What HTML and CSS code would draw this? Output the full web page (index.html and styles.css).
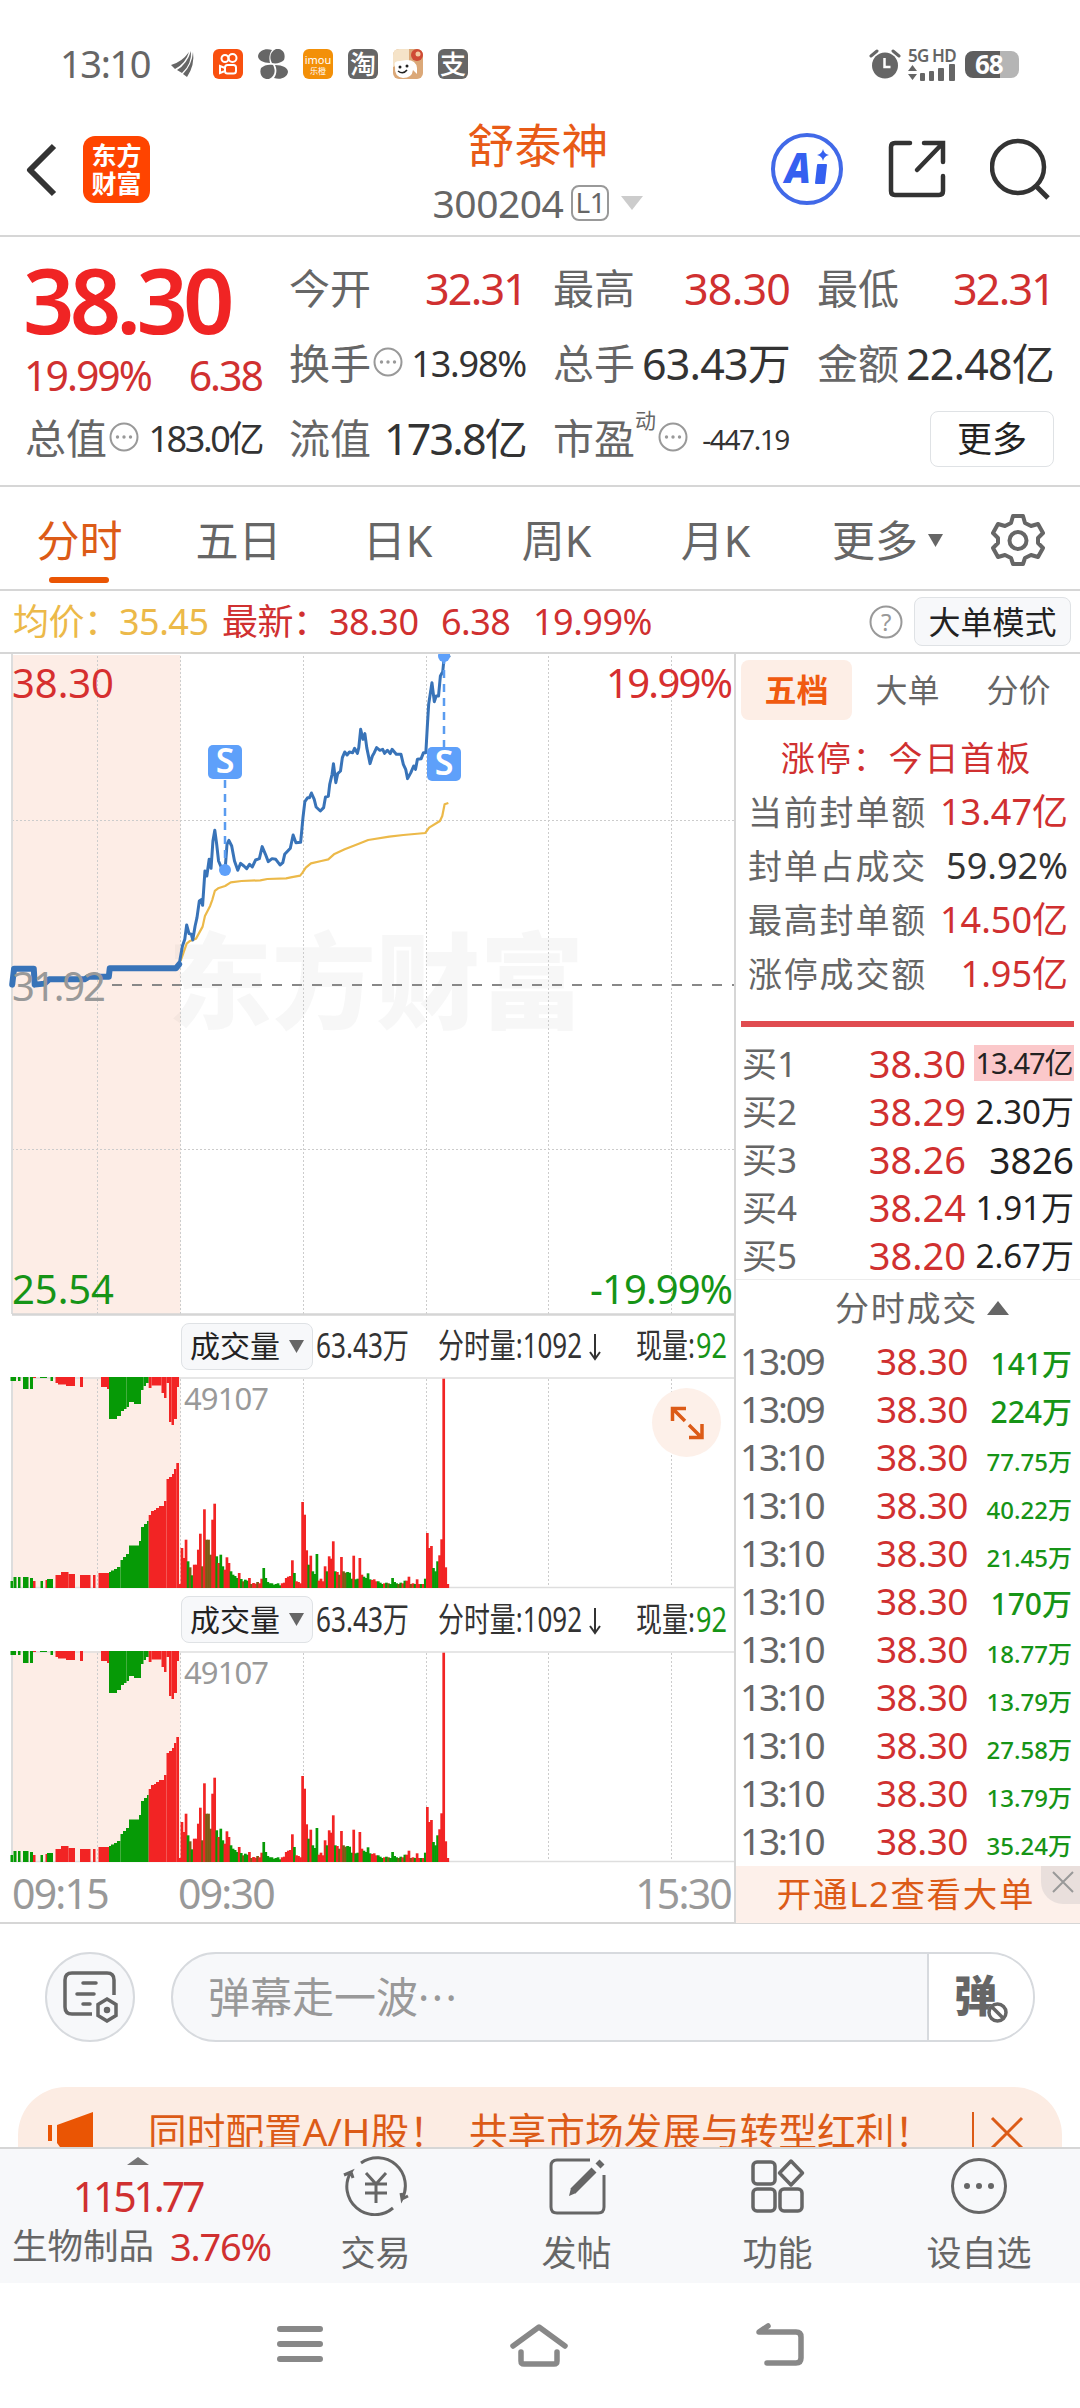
FILE: index.html
```html
<!DOCTYPE html>
<html lang="zh-CN">
<head>
    <meta charset="UTF-8">
    <meta name="viewport" content="width=device-width, initial-scale=1.0">
    <title>舒泰神 300204</title>
    <link rel="stylesheet" href="styles.css">
</head>
<body>
    <div class="status-bar">
        <span class="clock">13:10</span>
        <div class="status-icons">
            <svg width="30" height="30" viewBox="0 0 30 30" fill="#666"><path d="M3 16Q14 13 21 3 18 14 7 20zM9 21Q19 15 23 2q1 13-9 22zM15 25Q24 16 25 3q2 13-6 25z"/></svg>
            <svg width="30" height="30" viewBox="0 0 30 30"><rect width="30" height="30" rx="6" fill="#f9500f"/><g fill="none" stroke="#fff" stroke-width="2"><circle cx="12" cy="9.500" r="3.500"/><circle cx="19.500" cy="9" r="4"/><rect x="12" y="16" width="11" height="8.500" rx="2.500"/><path d="M12 19l-5-2v7l5-2z"/></g></svg>
            <svg width="30" height="30" viewBox="0 0 30 30"><g fill="#666"><path d="M14 14C11 8 12 3 18 0c7-1 10 5 8 11-3 3-8 4-12 3z"/><path d="M12 14C5 14 0 11 0 7 1 1 8-1 14 1c-3 4-3 9-2 13z"/><path d="M15 16c3 6 2 11-4 14-7 1-10-5-8-11 3-3 8-4 12-3z"/><path d="M17 16c8 0 13 3 13 7-1 6-8 8-14 6 3-4 3-9 1-13z"/></g></svg>
            <span class="app-icon app-imou"><b>imou</b><i>乐橙</i></span>
            <span class="app-icon app-grey">淘</span>
            <svg width="30" height="30" viewBox="0 0 30 30"><rect width="30" height="30" rx="6" fill="#dba878"/><path d="M0 6q0-6 6-6h10v12L0 18z" fill="#f5e3c8"/><circle cx="24" cy="6" r="6" fill="#cf4a35"/><circle cx="25" cy="5" r="2.500" fill="#f3c9a0"/><path d="M2 17q-2-5 5-5l7-1q9 0 10 8v6l-4-4q-1 8-10 8-9-1-8-12z" fill="#fff"/><circle cx="7" cy="18" r="1.500" fill="#222"/><circle cx="14" cy="17" r="1.500" fill="#222"/><path d="M5 22q5 4 9-1" fill="none" stroke="#222" stroke-width="1.500"/></svg>
            <span class="app-icon app-grey">支</span>
        </div>
        <div class="status-right">
            <svg width="32" height="30" viewBox="0 0 32 30"><circle cx="16" cy="16.500" r="13" fill="#666"/><path d="M2 7l6-5M30 7l-6-5" stroke="#666" stroke-width="3" stroke-linecap="round"/><path d="M15.500 9v9h6" fill="none" stroke="#fff" stroke-width="2.500"/></svg>
            <div class="signal">
                <span>5G HD</span>
                <svg width="48" height="17" viewBox="0 0 48 17" fill="#666"><path d="M0 7l4.500-6L9 7zM0 10h9l-4.500 6z"/><rect x="12" y="9" width="5" height="8" rx="1"/><rect x="21" y="7" width="5" height="10" rx="1"/><rect x="30" y="4" width="6" height="13" rx="1"/><rect x="41" y="0" width="6" height="17" rx="1"/></svg>
            </div>
            <div class="battery"><span>68</span></div>
        </div>
    </div>

    <header class="header">
        <div class="header-left">
            <svg width="32" height="56" viewBox="0 0 32 56"><path d="M28 4 4 28l24 24" fill="none" stroke="#333" stroke-width="6" stroke-linejoin="round"/></svg>
            <div class="logo">东方<br>财富</div>
        </div>
        <div class="header-title">
            <h1>舒泰神</h1>
            <div class="code"><span>300204</span><em>L1</em><svg width="22" height="14" viewBox="0 0 22 14"><path d="M0 0h22L11 14z" fill="#ccc"/></svg></div>
        </div>
        <div class="header-right">
            <svg width="74" height="74" viewBox="0 0 74 74"><circle cx="37" cy="37" r="34" fill="none" stroke="#4169e8" stroke-width="4"/><text x="15" y="51" class="ai-text" textLength="26" lengthAdjust="spacingAndGlyphs">A</text><path d="M48 33h8l-2 18h-8z" fill="#3560f0" stroke="#3560f0" stroke-linejoin="round" stroke-width="2"/><path d="M53 17q1 5 6 6-5 1-6 6-1-5-6-6 5-1 6-6z" fill="#3560f0"/></svg>
            <svg width="60" height="60" viewBox="0 0 60 60"><path d="M23 4H8q-4 0-4 4v44q0 4 4 4h44q4 0 4-4V37M37 4h19v19M55 5 30 31" fill="none" stroke="#333" stroke-width="4.500" stroke-linecap="round"/></svg>
            <svg width="60" height="62" viewBox="0 0 60 62"><circle cx="28" cy="29" r="26" fill="none" stroke="#333" stroke-width="4.500"/><path d="M46 48l12 12" stroke="#333" stroke-width="5"/></svg>
        </div>
    </header>

    <section class="quote">
        <div class="quote-main">
            <strong>38.30</strong>
            <div class="quote-change"><span>19.99%</span><span>6.38</span></div>
        </div>
        <div class="item"><label>今开</label><b class="red tight">32.31</b></div>
        <div class="item"><label>最高</label><b class="red">38.30</b></div>
        <div class="item"><label>最低</label><b class="red tight">32.31</b></div>
        <div class="item"><label>换手<svg class="dots"><use href="#dots"/></svg></label><b class="mid">13.98%</b></div>
        <div class="item"><label>总手</label><b>63.43万</b></div>
        <div class="item"><label>金额</label><b>22.48亿</b></div>
        <div class="item"><label>总值<svg class="dots"><use href="#dots"/></svg></label><b class="mid total">183.0亿</b></div>
        <div class="item"><label>流值</label><b class="tight">173.8亿</b></div>
        <div class="item"><label>市盈<sup>动</sup><svg class="dots"><use href="#dots"/></svg></label><b class="small">-447.19</b></div>
        <div class="item item-end"><button class="more-button">更多</button></div>
    </section>

    <nav class="tabs">
        <a class="active">分时</a>
        <a>五日</a>
        <a>日K</a>
        <a>周K</a>
        <a>月K</a>
        <a class="tab-more">更多<svg width="15" height="13" viewBox="0 0 15 13"><path d="M0 0h15L7.500 13z" fill="#666"/></svg></a>
        <svg class="gear" width="54" height="54" viewBox="0 0 54 54"><path d="M22 3h10l2 7 6 3 7-2 5 9-5 5v5l5 5-5 9-7-2-6 3-2 6H22l-2-6-6-3-7 2-5-9 5-5v-5l-5-5 5-9 7 2 6-3z" fill="none" stroke="#666" stroke-width="4" stroke-linejoin="round"/><circle cx="27" cy="27.500" r="8.500" fill="none" stroke="#666" stroke-width="4"/></svg>
    </nav>

    <div class="legend">
        <span class="avg">均价：</span><span class="avg avg-value">35.45</span>
        <span class="latest">最新：</span><span class="latest v1">38.30</span><span class="latest v2">6.38</span><span class="latest v3">19.99%</span>
        <svg class="help" width="34" height="34" viewBox="0 0 34 34"><circle cx="17" cy="17" r="15.500" fill="none" stroke="#999" stroke-width="2"/><text x="17" y="25.500" text-anchor="middle" font-size="24" fill="#999">?</text></svg>
        <button class="mode-button">大单模式</button>
    </div>

    <main class="board">
        <div class="charts">
            <svg class="price-chart" width="734" height="662" viewBox="0 0 734 662">
                <rect x="12" y="1" width="168.500" height="659" fill="#fdede6"/>
                <text x="168" y="367" class="watermark" textLength="416">东方财富</text>
                <g class="grid-lines">
                    <path d="M97.500 2V660M180.500 2V660M303.500 2V660M426.500 2V660M548.500 2V660M671.500 2V660M12 166.500H734M12 495.500H734"/>
                </g>
                <path d="M12 0V660" stroke="#ddd" stroke-width="2"/>
                <path d="M12 660.500H734" stroke="#d5d5d5" stroke-width="2.500"/>
                <path d="M112 331H734" stroke="#888" stroke-width="2" stroke-dasharray="10 10"/>
                <g transform="translate(0 -13) scale(.469 .3333)" class="lines">
                    <polyline class="line-avg" points="385,960 390,940 398,908 405,900 418,893 425,875 432,857 437,825 448,795 453,775 458,750 465,742 480,735 492,724 515,720 555,718 570,714 610,712 620,709 640,704 645,695 652,680 663,667 685,660 700,655 712,640 735,625 765,608 785,597 830,587 860,582 907,576 915,560 938,540 943,525 948,490 956,486"/>
                    <polyline class="line-pre" points="26,1031 30,983 72,983 74,1031 95,1028 105,1015 180,1015 190,1007 232,1007 234,982 375,982 382,970"/>
                    <polyline class="line-price" points="382,970 389,915 394,895 398,852 403,878 408,880 411,897 416,855 420,830 425,780 429,776 432,793 437,690 441,705 446,655 450,682 454,600 458,568 462,610 466,660 472,680 480,686 484,610 488,598 494,615 500,660 507,688 513,667 520,675 526,683 532,670 538,678 545,657 553,653 559,617 566,640 572,662 580,653 588,655 597,672 603,665 607,640 619,622 625,582 631,605 641,604 646,530 650,482 656,470 660,470 664,456 670,475 674,498 683,510 690,500 694,468 700,466 703,430 708,400 711,368 716,425 720,398 726,390 730,350 735,333 740,342 745,333 752,335 756,322 762,337 765,320 769,265 774,295 778,278 782,320 789,368 794,345 798,335 803,320 810,328 816,325 820,337 826,328 832,338 836,325 845,340 855,340 860,370 865,385 869,413 876,395 882,375 886,385 890,355 898,353 903,335 908,335 911,260 914,190 921,125 926,182 930,165 935,165 939,105 944,92 947,50 960,44"/>
                </g>
                <g class="marker">
                    <path d="M225 126V216M444 2V94"/>
                    <circle cx="225" cy="216" r="6"/>
                    <circle cx="444" cy="2" r="6"/>
                    <rect x="208" y="91" width="34" height="34" rx="5"/>
                    <rect x="427" y="93" width="34" height="34" rx="5"/>
                    <text x="225" y="119">S</text>
                    <text x="444" y="121">S</text>
                </g>
                <g class="axis-text">
                    <text x="12" y="44" fill="#d62f2f" textLength="102">38.30</text>
                    <text x="733" y="44" fill="#d62f2f" text-anchor="end" textLength="127">19.99%</text>
                    <text x="12" y="347" fill="#999" textLength="94">31.92</text>
                    <text x="12" y="650" fill="#169416" textLength="102">25.54</text>
                    <text x="733" y="650" fill="#169416" text-anchor="end" textLength="143">-19.99%</text>
                </g>
            </svg>

            <div class="volume-head">
                <button class="volume-button">成交量<svg width="15" height="13" viewBox="0 0 15 13"><path d="M0 0h15L7.500 13z" fill="#666"/></svg></button>
                <svg class="volume-info" width="421" height="50" viewBox="313 0 421 50"><use href="#volumeInfo"/></svg>
            </div>
            <svg class="volume-chart" width="734" height="212" viewBox="0 0 734 212"></svg>

            <div class="volume-head">
                <button class="volume-button">成交量<svg width="15" height="13" viewBox="0 0 15 13"><path d="M0 0h15L7.500 13z" fill="#666"/></svg></button>
                <svg class="volume-info" width="421" height="50" viewBox="313 0 421 50"><use href="#volumeInfo"/></svg>
            </div>
            <svg class="volume-chart" width="734" height="212" viewBox="0 0 734 212"></svg>

            <div class="time-axis"><span>09:15</span><span>09:30</span><span>15:30</span></div>

            <div class="expand">
                <svg width="36" height="36" viewBox="0 0 36 36"><path d="M3.500 16V3.500H17M4 4l12 12M33 19v13.500H20M32 32 20 20" fill="none" stroke="#dc5b17" stroke-width="3.500"/></svg>
            </div>
        </div>

        <aside class="side">
            <div class="side-tabs"><a class="active">五档</a><a>大单</a><a>分价</a></div>
            <div class="limit">
                <h2>涨停：今日首板</h2>
                <div><label>当前封单额</label><b class="red">13.47亿</b></div>
                <div><label>封单占成交</label><b>59.92%</b></div>
                <div><label>最高封单额</label><b class="red">14.50亿</b></div>
                <div><label>涨停成交额</label><b class="red">1.95亿</b></div>
            </div>
            <ul class="buys">
                <li><span>买1</span><b>38.30</b><em class="hot">13.47亿</em></li>
                <li><span>买2</span><b>38.29</b><em>2.30万</em></li>
                <li><span>买3</span><b>38.26</b><em class="full">3826</em></li>
                <li><span>买4</span><b>38.24</b><em>1.91万</em></li>
                <li><span>买5</span><b>38.20</b><em>2.67万</em></li>
            </ul>
            <div class="deals-title">分时成交<svg width="22" height="14" viewBox="0 0 22 14"><path d="M0 14h22L11 0z" fill="#666"/></svg></div>
            <ul class="deals">
                <li><span>13:09</span><b>38.30</b><em class="big">141万</em></li>
                <li><span>13:09</span><b>38.30</b><em class="big">224万</em></li>
                <li><span>13:10</span><b>38.30</b><em>77.75万</em></li>
                <li><span>13:10</span><b>38.30</b><em>40.22万</em></li>
                <li><span>13:10</span><b>38.30</b><em>21.45万</em></li>
                <li><span>13:10</span><b>38.30</b><em class="big">170万</em></li>
                <li><span>13:10</span><b>38.30</b><em>18.77万</em></li>
                <li><span>13:10</span><b>38.30</b><em>13.79万</em></li>
                <li><span>13:10</span><b>38.30</b><em>27.58万</em></li>
                <li><span>13:10</span><b>38.30</b><em>13.79万</em></li>
                <li><span>13:10</span><b>38.30</b><em>35.24万</em></li>
            </ul>
            <div class="level2">开通L2查看大单
                <span class="level2-close"><svg width="22" height="22" viewBox="0 0 22 22"><path d="M1 1l20 20M21 1 1 21" stroke="#999" stroke-width="2"/></svg></span>
            </div>
        </aside>
    </main>

    <div class="chat">
        <div class="chat-note">
            <svg width="56" height="52" viewBox="0 0 56 52" fill="none" stroke="#666" stroke-width="3.500"><path d="M51 24V9q0-7-7-7H9Q2 2 2 9v27q0 7 7 7h20"/><path d="M20 12h13M14 23h17M20 33h7" stroke-linecap="round"/><path d="M44 28l9 5.500v11L44 50l-9-5.500v-11z"/><circle cx="44" cy="39" r="1.500"/></svg>
        </div>
        <div class="chat-input">
            <span>弹幕走一波<small>···</small></span>
            <div class="chat-switch">弹<svg width="23" height="23" viewBox="0 0 23 23"><circle cx="11.500" cy="11.500" r="10" fill="#fff"/><circle cx="11.500" cy="11.500" r="8.500" fill="none" stroke="#666" stroke-width="3.500"/><path d="M6 6l11 11" stroke="#666" stroke-width="3.500"/></svg></div>
        </div>
    </div>

    <div class="notice">
        <svg width="48" height="50" viewBox="0 0 48 50" fill="#ea5504"><rect x="1" y="13" width="4" height="16"/><path d="M10 13 46 0v42l-18-6q-1 8-8 8-6 0-7-9l-3-4z"/></svg>
        <p>同时配置A/H股！<span>共享市场发展与转型红利！</span></p>
        <i></i>
        <svg class="notice-close" width="34" height="34" viewBox="0 0 34 34"><path d="M2 2l30 30M32 2 2 32" stroke="#dc5b17" stroke-width="3"/></svg>
    </div>

    <footer class="footer">
        <div class="sector">
            <svg width="22" height="8" viewBox="0 0 22 8"><path d="M0 8h22L11 0z" fill="#777"/></svg>
            <strong>1151.77</strong>
            <div><span>生物制品</span><b>3.76%</b></div>
        </div>
        <a>
            <svg width="66" height="60" viewBox="0 0 66 60" fill="none" stroke="#666" stroke-width="3"><path d="M18 7A28 28 0 0 1 59 43l-1-6M59 43l6-3M50 52A28 28 0 0 1 8 16l-7 3M8 16l2 6M23 17l10 11 10-11M33 28v19M22 28h22M22 37h22"/></svg>
            交易
        </a>
        <a>
            <svg width="60" height="60" viewBox="0 0 60 60" fill="none" stroke="#666" stroke-width="3"><path d="M43 4H10q-6 0-6 6v41q0 6 6 6h41q6 0 6-6V19"/><path d="M26 35 47 14" stroke-width="7"/><path d="M51 10l4-4" stroke-width="7"/><path d="M22 40l2-8 5 5z" fill="#666" stroke="none"/></svg>
            发帖
        </a>
        <a>
            <svg width="60" height="60" viewBox="0 0 60 60" fill="none" stroke="#666" stroke-width="3.500"><rect x="5" y="6" width="22" height="22" rx="4"/><rect x="5" y="33" width="22" height="22" rx="4"/><rect x="32" y="33" width="22" height="22" rx="4"/><path d="M43 5l11.500 12L43 29 31.500 17z" stroke-linejoin="round"/></svg>
            功能
        </a>
        <a>
            <svg width="60" height="60" viewBox="0 0 60 60"><circle cx="30" cy="30" r="26.500" fill="none" stroke="#666" stroke-width="3"/><g fill="#666"><circle cx="18" cy="30" r="3"/><circle cx="30" cy="30" r="3"/><circle cx="42" cy="30" r="3"/></g></svg>
            设自选
        </a>
    </footer>

    <div class="system-nav">
        <svg width="46" height="44" viewBox="0 0 46 44"><path d="M3 7h40M3 22h40M3 37h40" stroke="#888" stroke-width="6" stroke-linecap="round"/></svg>
        <svg width="60" height="46" viewBox="0 0 60 46" fill="none" stroke="#888" stroke-width="5.500" stroke-linejoin="round" stroke-linecap="round"><path d="M4 24 30 5l26 19M12 30v9q0 3 3 3h30q3 0 3-3v-9"/></svg>
        <svg width="50" height="46" viewBox="0 0 50 46" fill="none" stroke="#888" stroke-width="5.500" stroke-linejoin="round" stroke-linecap="round"><path d="M12 41h29q5 0 5-5V15q0-5-5-5H4l9-6"/></svg>
    </div>

    <svg class="defs" width="0" height="0">
        <symbol id="dots" viewBox="0 0 30 30"><circle cx="15" cy="15" r="13.500" fill="none" stroke="#999" stroke-width="2"/><g fill="#999"><circle cx="8.500" cy="15" r="1.700"/><circle cx="15" cy="15" r="1.700"/><circle cx="21.500" cy="15" r="1.700"/></g></symbol>
        <g id="volumeInfo" font-size="34" fill="#333">
            <text x="316" y="37" textLength="93" lengthAdjust="spacingAndGlyphs">63.43万</text>
            <text x="438" y="37" textLength="144" lengthAdjust="spacingAndGlyphs">分时量:1092</text>
            <path d="M595 13V37M590 31l5 7 5-7" fill="none" stroke="#333" stroke-width="2"/>
            <text x="636" y="37" textLength="59" lengthAdjust="spacingAndGlyphs">现量:</text>
            <text x="696" y="37" fill="#169416" textLength="31" lengthAdjust="spacingAndGlyphs">92</text>
        </g>
    </svg>
    <script src="script.js"></script>
</body>
</html>
```
FILE: styles.css
```css
:root {
    --text: #333;
    --label: #666;
    --muted: #999;
    --red: #d03030;
    --green: #169416;
    --orange: #dc5b17;
    --line: #d6d6d6;
    --soft: #f7f8fa;
}

* {
    box-sizing: border-box;
}

body {
    margin: 0;
    width: 1080px;
    height: 2408px;
    overflow: hidden;
    display: flex;
    flex-direction: column;
    background: #fff;
    color: var(--text);
    font-family: "Noto Sans", "Noto Sans CJK SC", sans-serif;
    line-height: 1;
    white-space: nowrap;
}

b, em, i, h1, h2, strong {
    font-weight: 400;
    font-style: normal;
}

h1, h2, p, ul {
    margin: 0;
    padding: 0;
}

li {
    list-style: none;
}

svg {
    display: block;
    flex: none;
}

button {
    font-family: inherit;
    line-height: 1;
    padding: 0;
    color: #222;
    background: var(--soft);
    border: 1px solid #dfe2e5;
    border-radius: 8px;
}

.defs {
    position: absolute;
}

.red {
    color: var(--red);
}

/* 状态栏 */
.status-bar {
    height: 98px;
    flex: none;
    padding: 30px 61px 0 60px;
    display: flex;
    align-items: center;
    color: #666;
}

.clock {
    width: 108px;
    margin-top: -2px;
    font-size: 38px;
    letter-spacing: -1.4px;
}

.status-icons {
    display: flex;
    gap: 15px;
}

.app-icon {
    width: 30px;
    height: 30px;
    border-radius: 6px;
    display: flex;
    flex-direction: column;
    align-items: center;
    justify-content: center;
    color: #fff;
}

.app-imou {
    gap: 2px;
    background: #f39008;
}

.app-imou b {
    font-size: 11px;
}

.app-imou i {
    font-size: 8px;
}

.app-grey {
    background: #666;
    font-size: 26px;
    font-weight: 500;
}

.status-right {
    margin-left: auto;
    display: flex;
    align-items: center;
    gap: 7px;
}

.signal {
    width: 50px;
}

.signal span {
    display: block;
    font-size: 17px;
    font-weight: 600;
    letter-spacing: -0.8px;
}

.battery {
    width: 54px;
    height: 27px;
    border-radius: 8px;
    background: linear-gradient(90deg, #5e5e5e 65%, #b5b5b5 65%);
    color: #fff;
    font-size: 26px;
    font-weight: 700;
    line-height: 26px;
    padding-left: 10px;
    letter-spacing: -1px;
}

/* 顶部标题 */
.header {
    height: 139px;
    flex: none;
    border-bottom: 2px solid var(--line);
    display: grid;
    grid-template-columns: 1fr 300px 1fr;
    padding: 0 30px 0 26px;
}

.header-left {
    display: flex;
    align-items: center;
    gap: 25px;
    padding-top: 6px;
}

.logo {
    width: 67px;
    height: 67px;
    border-radius: 12px;
    background: #ff4400;
    color: #fff;
    font-size: 25px;
    font-weight: 700;
    line-height: 28px;
    padding-top: 5px;
    text-align: center;
}

.header-title {
    text-align: center;
    padding-top: 24px;
}

.header-title h1 {
    font-size: 47px;
    color: #e85b17;
}

.code {
    display: flex;
    justify-content: center;
    align-items: center;
    gap: 8px;
    margin-top: 14px;
    font-size: 39px;
    letter-spacing: -0.5px;
    color: var(--label);
}

.code em {
    width: 38px;
    height: 36px;
    border: 2px solid #999;
    border-radius: 8px;
    font-size: 28px;
    line-height: 31px;
}

.code svg {
    margin-left: 4px;
}

.header-right {
    display: flex;
    align-items: center;
    justify-content: flex-end;
    gap: 43px;
    padding-top: 4px;
}

.ai-text {
    font-size: 42px;
    font-weight: 900;
    font-style: italic;
    fill: #3560f0;
}

/* 行情数据 */
.quote {
    height: 250px;
    flex: none;
    border-bottom: 2px solid var(--line);
    display: grid;
    grid-template-columns: repeat(4, 236px);
    grid-template-rows: repeat(3, 75px);
    column-gap: 28px;
    padding: 14px 26px;
}

.quote-main {
    grid-row: span 2;
    color: var(--red);
}

.quote-main strong {
    display: block;
    margin: 3px 0 0 -3px;
    font-size: 90px;
    font-weight: 600;
    letter-spacing: -4.8px;
    color: #f02424;
}

.quote-change {
    display: flex;
    justify-content: space-between;
    font-size: 41px;
    letter-spacing: -2px;
    margin: 11px 0 0 -2px;
}

.item {
    display: flex;
    align-items: center;
    justify-content: space-between;
    font-size: 43px;
}

.item label {
    display: flex;
    align-items: center;
    font-size: 41px;
    color: var(--label);
    margin-left: -1px;
}

.item sup {
    font-size: 21px;
    align-self: flex-start;
    margin-top: -8px;
    line-height: 1;
    vertical-align: baseline;
}

.item b {
    letter-spacing: -0.8px;
}

.item .tight {
    letter-spacing: -1.8px;
}

.item .mid {
    font-size: 36px;
    letter-spacing: -1.2px;
}

.item .total {
    letter-spacing: -2.4px;
}

.item .small {
    font-size: 28px;
    letter-spacing: -1.4px;
    margin-right: 1px;
}

.dots {
    width: 30px;
    height: 30px;
    margin: -4px 0 0 2px;
}

.item-end {
    justify-content: flex-end;
}

.more-button {
    width: 124px;
    height: 56px;
    font-size: 35px;
    background: #fff;
}

/* 周期切换 */
.tabs {
    height: 104px;
    flex: none;
    border-bottom: 2px solid var(--line);
    display: flex;
    align-items: center;
    padding: 4px 35px 0 0;
    font-size: 43px;
    color: var(--label);
}

.tabs a {
    width: 159px;
    height: 100%;
    display: flex;
    align-items: center;
    justify-content: center;
}

.tabs .active {
    position: relative;
    color: #dc5b17;
}

.tabs .active::after {
    content: "";
    position: absolute;
    bottom: 6px;
    left: 49px;
    width: 60px;
    height: 6px;
    border-radius: 3px;
    background: #ea5504;
}

.tabs .tab-more {
    width: 185px;
    gap: 10px;
}

.gear {
    margin-left: auto;
}

/* 均价 / 最新 */
.legend {
    height: 63px;
    flex: none;
    border-bottom: 2px solid var(--line);
    display: flex;
    align-items: center;
    padding: 0 9px 0 13px;
    font-size: 36px;
    letter-spacing: -0.5px;
}

.legend .avg {
    color: #ecb949;
    width: 106px;
}

.legend .avg-value {
    width: 103px;
}

.latest {
    color: var(--red);
    width: 107px;
}

.legend .v1 {
    width: 112px;
}

.legend .v2 {
    width: 92px;
}

.help {
    margin-left: auto;
    margin-right: 11px;
}

.mode-button {
    width: 157px;
    height: 49px;
    font-size: 32px;
}

/* 主体 */
.board {
    height: 1270px;
    flex: none;
    border-bottom: 2px solid var(--line);
    display: grid;
    grid-template-columns: 734px 346px;
}

.charts {
    position: relative;
}

.watermark {
    font-size: 104px;
    font-weight: 900;
    fill: #888;
    fill-opacity: 0.07;
}

.grid-lines path {
    stroke: #ccc;
    stroke-width: 1;
    stroke-dasharray: 2 2;
}

.lines polyline {
    fill: none;
    stroke-linejoin: round;
    vector-effect: non-scaling-stroke;
}

.line-avg {
    stroke: #ecb949;
    stroke-width: 2.2;
}

.line-pre {
    stroke: #3873b8;
    stroke-width: 6;
    stroke-linecap: round;
}

.line-price {
    stroke: #3873b8;
    stroke-width: 3;
}

.marker path {
    stroke: #5a9cf0;
    stroke-width: 2.5;
    stroke-dasharray: 8 6;
}

.marker circle,
.marker rect {
    fill: #5ea0fa;
}

.marker text {
    fill: #fff;
    font-size: 34px;
    font-weight: 600;
    text-anchor: middle;
}

.axis-text {
    font-size: 40px;
}

.volume-head {
    height: 61px;
    display: flex;
    align-items: center;
    padding: 0 0 1px 181px;
}

.volume-head + .volume-chart + .volume-head {
    height: 62px;
}

.volume-button {
    width: 132px;
    height: 47px;
    display: flex;
    align-items: center;
    justify-content: center;
    gap: 9px;
    font-size: 30px;
}

.time-axis {
    height: 60px;
    display: grid;
    grid-template-columns: 166px 1fr auto;
    align-items: center;
    padding: 1px 3px 0 12px;
    font-size: 41px;
    letter-spacing: -1.8px;
    color: var(--muted);
}

.expand {
    position: absolute;
    left: 652px;
    top: 734px;
    width: 69px;
    height: 69px;
    border-radius: 50%;
    background: #fdf0e9;
    display: flex;
    align-items: center;
    justify-content: center;
}

/* 右侧盘口 */
.side {
    border-left: 2px solid var(--line);
    display: flex;
    flex-direction: column;
}

.side-tabs {
    display: flex;
    padding: 6px 0 0 5px;
    font-size: 32px;
    color: var(--label);
}

.side-tabs a {
    width: 111px;
    height: 60px;
    display: flex;
    align-items: center;
    justify-content: center;
}

.side-tabs .active {
    background: #fdeee6;
    border-radius: 8px;
    color: #f05a10;
    font-weight: 700;
}

.limit {
    height: 307px;
    margin: 0 6px 0 5px;
    padding: 12px 6px 0 7px;
    border-bottom: 6px solid #e04c50;
}

.limit h2 {
    height: 53px;
    line-height: 53px;
    text-align: center;
    font-size: 34px;
    letter-spacing: 1.9px;
    margin-left: -3px;
    color: var(--red);
}

.limit div {
    height: 54px;
    display: flex;
    align-items: center;
    justify-content: space-between;
    font-size: 36px;
}

.limit label {
    font-size: 34px;
    letter-spacing: 1.8px;
    color: var(--label);
}

.buys {
    height: 253px;
    padding-top: 12px;
    border-bottom: 1px solid #ececec;
}

.buys li,
.deals li {
    height: 48px;
    display: grid;
    align-items: center;
    padding: 0 6px 0 6px;
}

.buys li {
    grid-template-columns: 88px 136px 108px;
    padding-right: 0;
    font-size: 35px;
}

.side li span {
    color: var(--label);
}

.side li b {
    color: var(--red);
    text-align: right;
}

.side li em {
    text-align: right;
}

.buys b {
    font-size: 38px;
}

.buys em {
    font-size: 33px;
    color: #222;
}

.buys .full {
    font-size: 37px;
}

.buys .hot {
    width: 100px;
    height: 36px;
    margin-left: 8px;
    font-size: 29px;
    letter-spacing: -1px;
    line-height: 35px;
    text-align: center;
    background: #fbc8ca;
}

.deals-title {
    height: 56px;
    display: flex;
    align-items: center;
    justify-content: center;
    gap: 9px;
    font-size: 34px;
    letter-spacing: 1.8px;
    color: var(--label);
    padding-left: 28px;
}

.deals li {
    grid-template-columns: 93px 135px 1fr;
    align-items: baseline;
    padding: 6px 8px 0 4px;
}

.deals li:last-child {
    height: 50px;
}

.deals span {
    font-size: 37px;
    letter-spacing: -2.2px;
}

.deals b {
    font-size: 37px;
    letter-spacing: -0.5px;
}

.deals em {
    font-size: 24px;
    color: var(--green);
    font-weight: 500;
}

.deals .big {
    font-size: 30px;
}

.level2 {
    position: relative;
    flex: 1;
    display: flex;
    align-items: center;
    justify-content: center;
    padding-right: 4px;
    background: #fdf0ea;
    color: var(--orange);
    font-size: 34.5px;
    letter-spacing: 1.7px;
}

.level2-close {
    position: absolute;
    top: 0;
    right: 0;
    width: 39px;
    height: 38px;
    padding: 5px 0 0 11px;
    background: #e9dfdc;
    border-bottom-left-radius: 22px;
}

/* 弹幕输入 */
.chat {
    flex: none;
    display: flex;
    gap: 36px;
    padding: 28px 45px 0;
}

.chat-note {
    width: 90px;
    height: 90px;
    border: 2px solid #d7dade;
    border-radius: 50%;
    background: var(--soft);
    display: flex;
    align-items: center;
    justify-content: center;
    padding-left: 2px;
}

.chat-input {
    width: 864px;
    height: 90px;
    border: 2px solid #d7dade;
    border-radius: 45px;
    background: var(--soft);
    display: flex;
    align-items: center;
    overflow: hidden;
    padding-left: 35px;
    font-size: 42px;
    color: var(--muted);
}

.chat-input small {
    font-size: 42px;
    letter-spacing: 2.5px;
}

.chat-switch {
    position: relative;
    width: 106px;
    height: 90px;
    margin-left: auto;
    padding: 22px 0 0 25px;
    border-left: 2px solid #d7dade;
    background: #fff;
    color: var(--label);
    font-size: 43px;
    font-weight: 900;
}

.chat-switch svg {
    position: absolute;
    left: 57px;
    top: 49px;
}

/* 公告 */
.notice {
    height: 60px;
    flex: none;
    margin: 45px 18px 0;
    padding: 25px 38px 0 29px;
    display: flex;
    align-items: flex-start;
    overflow: hidden;
    border-radius: 48px 48px 0 0;
    background: #fcece3;
    color: var(--orange);
    font-size: 38.7px;
}

.notice p {
    margin-left: 53px;
}

.notice p span {
    margin-left: 21px;
}

.notice i {
    width: 2px;
    height: 40px;
    margin-left: auto;
    background: var(--orange);
}

.notice-close {
    margin: 4px 0 0 16px;
}

/* 底部工具栏 */
.footer {
    height: 136px;
    flex: none;
    border-top: 2px solid var(--line);
    background: var(--soft);
    display: grid;
    grid-template-columns: 275px 201px 201px 201px 202px;
}

.footer a {
    display: flex;
    flex-direction: column;
    align-items: center;
    gap: 19px;
    padding-top: 7px;
    font-size: 35px;
    color: var(--label);
}

.sector {
    display: flex;
    flex-direction: column;
    align-items: center;
    padding-top: 8px;
    color: var(--red);
}

.sector strong {
    margin-top: 11px;
    font-size: 41px;
    letter-spacing: -3.2px;
}

.sector div {
    width: 100%;
    display: flex;
    align-items: center;
    justify-content: space-between;
    margin-top: 10px;
    padding: 0 4px 0 12px;
    font-size: 38px;
    letter-spacing: -1.2px;
}

.sector span {
    font-size: 35.5px;
    letter-spacing: 0;
    color: var(--label);
}

/* 系统导航 */
.system-nav {
    height: 126px;
    flex: none;
    display: flex;
    justify-content: center;
    gap: 186px;
    padding: 39px 0 0 2px;
}
```
FILE: script.js
```js
const RED = '#f22424';
const GREEN = '#069a06';
const MIX = '#7d5a14';
const colors = { r: RED, g: GREEN, o: MIX };

// 集合竞价：[起点, 终点, 高度, 颜色]
const auctionBottom = [
    [10.5, 13, 7, 'g'], [13.5, 16.5, 11, 'g'], [18, 20.5, 11, 'g'], [23, 28.5, 11, 'g'], [30, 33, 10, 'g'], [33, 35.5, 7, 'r'],
    [40.5, 43, 7, 'g'], [45.5, 47, 8, 'r'], [47, 53, 9, 'g'], [55.5, 61, 13, 'r'], [61, 68.5, 16, 'r'], [68.5, 75, 14, 'r'],
    [80, 90.5, 13, 'r'], [93, 95.5, 13, 'r'], [98.5, 109, 15, 'r'], [109, 111, 16, 'g'], [111, 114, 17.5, 'g'],
    [114, 117, 19, 'g'], [117, 120.5, 21, 'g'], [120.5, 123, 28, 'g'], [123, 126, 31, 'g'], [126, 129, 34, 'g'],
    [129, 139, 42.5, 'g'], [139, 141, 47, 'g'], [141, 144, 61, 'g'], [144, 147, 64, 'g'], [147, 148.7, 67, 'g'],
    [148.7, 151, 73, 'r'], [151, 154, 77, 'r'], [154, 156, 78, 'r'], [156, 159, 80, 'r'], [159, 164, 82, 'r'],
    [164, 166.5, 87, 'r'], [166.5, 169, 109, 'r'], [169, 172, 111, 'r'], [172, 174, 114, 'r'], [174, 176.3, 119, 'r'],
    [176.3, 179, 125, 'r']
];
const auctionTop = [
    [10.5, 16, 4, 'g'], [18, 20.5, 4, 'g'], [23, 28.5, 12, 'g'], [30, 33, 12, 'g'], [33, 36, 1, 'r'], [40, 47, 1, 'g'],
    [50.5, 53, 4, 'g'], [55.5, 58, 6, 'r'], [58, 66, 7.5, 'r'], [66, 75, 9, 'r'], [80, 83, 10, 'r'], [101, 107, 10, 'r'],
    [107, 109, 12, 'r'], [109, 117, 42, 'g'], [117, 121, 39, 'g'], [121, 124, 34, 'g'], [124, 126.5, 32, 'g'],
    [126.5, 129, 30, 'g'], [129, 134, 25, 'g'], [134, 141, 27, 'g'], [141, 143.5, 13, 'g'], [143.5, 146, 9, 'g'],
    [146, 148.7, 6, 'g'], [148.7, 151.5, 11, 'r'], [151.5, 161.5, 8.5, 'r'], [161.5, 164, 16, 'r'], [164, 166.5, 21, 'r'],
    [166.5, 169, 6, 'r'], [169, 171.5, 45, 'r'], [171.5, 174, 48, 'r'], [174, 177, 42, 'r'], [177, 179, 10, 'r']
];

// 连续竞价，每分钟一根
const minutes = ('r120 r90 r145 g80 o62 g38 r70 r70 r115 r163 o65 r236 o145 o145 o100 r205 r253 g95 r75 g100 g65 r55 r92 r75 g50 g40 g36 g30 r45 g27 ' +
    'o20 g25 g22 r30 o12 r15 r13 o18 r14 r28 g60 g30 g18 g14 g14 g10 g12 g14 g8 r14 r16 r30 r34 r36 r83 g45 r20 r18 r14 r258 ' +
    'r220 r113 g70 r97 g50 g42 g102 r22 r28 r20 r65 g50 r95 r88 r140 g50 r48 o40 r93 o50 o46 g48 g46 g28 r97 g26 g28 r90 r40 g34 ' +
    'g30 g44 g26 r24 r26 r20 g20 g16 g12 r14 g16 o14 g12 g30 g18 g14 o12 g16 r14 g22 r22 r34 o12 r14 g12 r26 r12 g12 r12 g28 ' +
    'r165 r120 r126 g60 g50 g80 r98 r146 r628 r62 r12').split(' ');

function rect(x, y, w, h, color) {
    return `<rect x="${x}" y="${y}" width="${w}" height="${h}" fill="${color}"/>`;
}

function drawVolume(svg) {
    const bottom = 211;
    let html = rect(12, 0, 168.5, bottom, '#fdede6');
    html += '<g class="grid-lines"><path d="M97.500 2V210M180.500 2V210M303.500 2V210M426.500 2V210M548.500 2V210M671.500 2V210"/></g>';
    html += '<path d="M12 0V211" stroke="#ddd" stroke-width="2"/>';
    html += '<path d="M12 1H734M12 210.500H734" stroke="#dedede" stroke-width="1.500"/>';
    auctionBottom.forEach(([a, b, h, c]) => { html += rect(a, bottom - h, b - a, h, colors[c]); });
    auctionTop.forEach(([a, b, h, c]) => { html += rect(a, 0, b - a, h, colors[c]); });
    html += rect(179, bottom - 4, 2, 4, RED);
    minutes.forEach((m, i) => {
        const h = Number(m.slice(1)) / 3;
        html += rect((180.6 + i * 2.045).toFixed(2), (bottom - h).toFixed(1), 2.7, h.toFixed(1), colors[m[0]]);
    });
    html += '<text x="184" y="33" font-size="31" fill="#999" textLength="85">49107</text>';
    svg.innerHTML = html;
}

document.querySelectorAll('.volume-chart').forEach(drawVolume);
```
